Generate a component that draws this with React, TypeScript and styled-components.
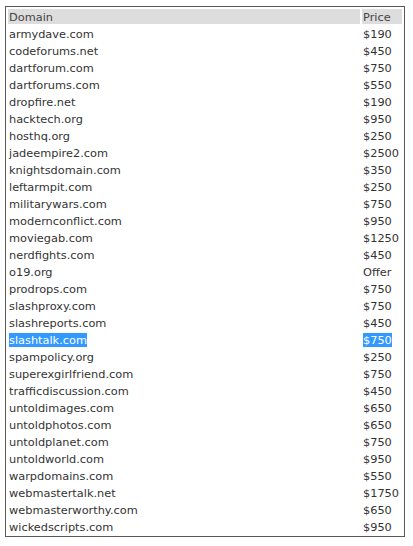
import styled, { createGlobalStyle } from "styled-components";

interface Listing {
  domain: string;
  price: string;
}

const listings: Listing[] = [
  { domain: "armydave.com", price: "$190" },
  { domain: "codeforums.net", price: "$450" },
  { domain: "dartforum.com", price: "$750" },
  { domain: "dartforums.com", price: "$550" },
  { domain: "dropfire.net", price: "$190" },
  { domain: "hacktech.org", price: "$950" },
  { domain: "hosthq.org", price: "$250" },
  { domain: "jadeempire2.com", price: "$2500" },
  { domain: "knightsdomain.com", price: "$350" },
  { domain: "leftarmpit.com", price: "$250" },
  { domain: "militarywars.com", price: "$750" },
  { domain: "modernconflict.com", price: "$950" },
  { domain: "moviegab.com", price: "$1250" },
  { domain: "nerdfights.com", price: "$450" },
  { domain: "o19.org", price: "Offer" },
  { domain: "prodrops.com", price: "$750" },
  { domain: "slashproxy.com", price: "$750" },
  { domain: "slashreports.com", price: "$450" },
  { domain: "slashtalk.com", price: "$750" },
  { domain: "spampolicy.org", price: "$250" },
  { domain: "superexgirlfriend.com", price: "$750" },
  { domain: "trafficdiscussion.com", price: "$450" },
  { domain: "untoldimages.com", price: "$650" },
  { domain: "untoldphotos.com", price: "$650" },
  { domain: "untoldplanet.com", price: "$750" },
  { domain: "untoldworld.com", price: "$950" },
  { domain: "warpdomains.com", price: "$550" },
  { domain: "webmastertalk.net", price: "$1750" },
  { domain: "webmasterworthy.com", price: "$650" },
  { domain: "wickedscripts.com", price: "$950" },
];

const selectedDomain = "slashtalk.com";

const GlobalStyle = createGlobalStyle`
  body {
    margin: 0;
    background: #ffffff;
    font-family: "DejaVu Sans", Verdana, sans-serif;
  }
`;

const Page = styled.div`
  padding: 6px 0 0 5px;
`;

const Table = styled.div`
  width: 400px;
  box-sizing: border-box;
  border: 1px solid #5a5a5a;
  padding: 2px;
  display: grid;
  grid-template-columns: 1fr 40px;
  grid-auto-rows: 15px;
  gap: 2px;
`;

const HeadCell = styled.div`
  background-color: #dddddd;
  color: #444444;
  font-size: 8.5pt;
  line-height: 17px;
  height: 15px;
  overflow: visible;
  padding-left: 1px;
  white-space: nowrap;
`;

const Cell = styled.div`
  color: #333333;
  font-size: 8.5pt;
  line-height: 17px;
  height: 15px;
  padding-left: 1px;
  white-space: nowrap;
`;

const Text = styled.span<{ $selected: boolean }>`
  background-color: ${({ $selected }) => ($selected ? "#3399ff" : "transparent")};
  color: ${({ $selected }) => ($selected ? "#ffffff" : "inherit")};
`;

const App = () => {
  return (
    <Page>
      <GlobalStyle />
      <Table>
        <HeadCell>Domain</HeadCell>
        <HeadCell>Price</HeadCell>
        {listings.map(({ domain, price }) => {
          const selected = domain === selectedDomain;
          return [
            <Cell key={domain}>
              <Text $selected={selected}>{domain}</Text>
            </Cell>,
            <Cell key={domain + "-price"}>
              <Text $selected={selected}>{price}</Text>
            </Cell>,
          ];
        })}
      </Table>
    </Page>
  );
};

export default App;
